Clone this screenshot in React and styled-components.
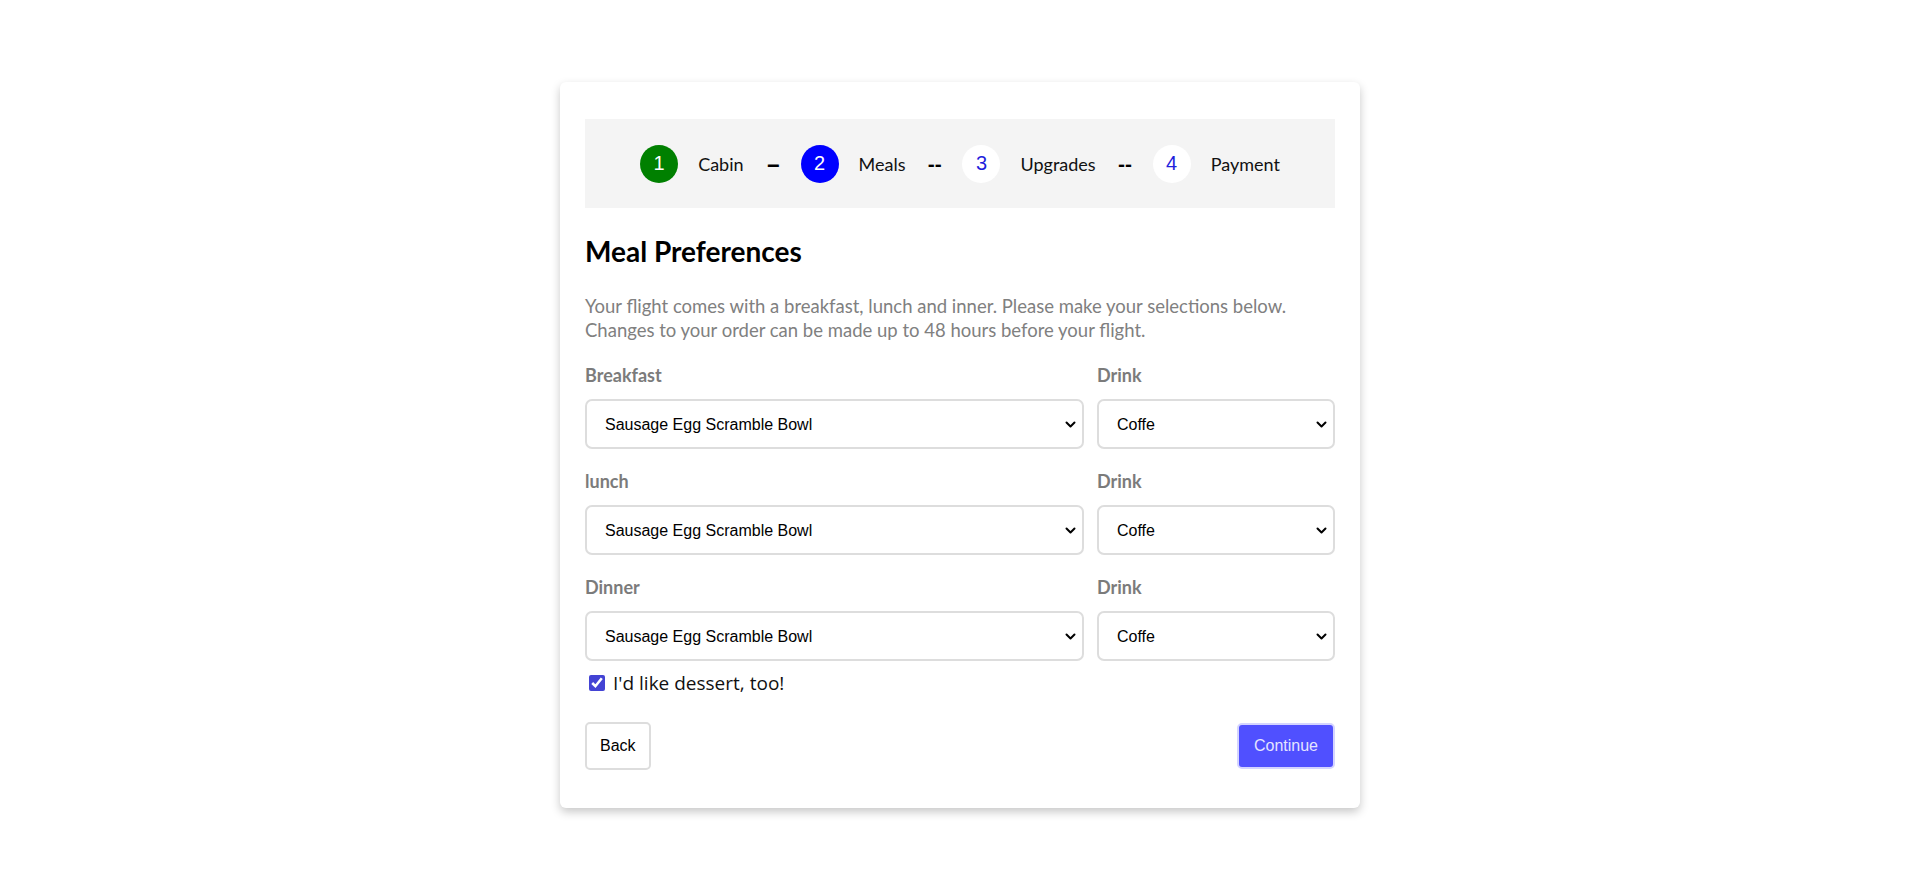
import React from "react";
import styled, { createGlobalStyle } from "styled-components";

const Global = createGlobalStyle`
  html, body { margin: 0; padding: 0; background: #fff; }
  body { font-family: Lato, "Liberation Sans", sans-serif; }
  * { box-sizing: border-box; }
`;

const Page = styled.div`
  display: flex;
  justify-content: center;
  padding-top: 82px;
  min-height: 890px;
`;

const Card = styled.div`
  width: 800px;
  background: #fff;
  border-radius: 6px;
  box-shadow: 0 4px 10px rgba(0, 0, 0, 0.22);
  padding: 37px 25px 38px;
  align-self: flex-start;
`;

const Stepper = styled.div`
  height: 89px;
  background: #f4f4f4;
  display: flex;
  align-items: center;
  justify-content: center;
`;

const Circle = styled.div`
  width: 38px;
  height: 38px;
  border-radius: 50%;
  display: flex;
  align-items: center;
  justify-content: center;
  font-family: "Liberation Sans", Arial, sans-serif;
  font-size: 20px;
  background: ${(p) => p.$bg};
  color: ${(p) => p.$fg};
  flex: none;
`;

const StepLabel = styled.span`
  font-family: Lato, sans-serif;
  font-size: 18px;
  color: #111;
  margin-left: 20px;
  margin-right: ${(p) => (p.$last ? "0" : "22px")};
`;

const Dash = styled.span`
  width: 14px;
  font-family: Lato, sans-serif;
  font-weight: 900;
  font-size: ${(p) => (p.$single ? "27px" : "20px")};
  line-height: 20px;
  color: #000;
  text-align: center;
  margin-right: 21px;
  letter-spacing: -0.5px;
  overflow: visible;
  white-space: nowrap;
`;

const Title = styled.h2`
  margin: 28px 0 0;
  font-family: Lato, sans-serif;
  font-weight: 700;
  font-size: 28px;
  line-height: 30px;
  color: #000;
`;

const Intro = styled.p`
  margin: 28px 0 0;
  font-family: Lato, sans-serif;
  font-size: 18.5px;
  line-height: 24px;
  color: #808080;
`;

const Grid = styled.div`
  margin-top: 21px;
  display: grid;
  grid-template-columns: 499px 1fr;
  column-gap: 13px;
  row-gap: 20px;
`;

const Field = styled.div`
  display: flex;
  flex-direction: column;
`;

const Label = styled.label`
  font-family: Lato, sans-serif;
  font-weight: 700;
  font-size: 18px;
  line-height: 24px;
  color: #7b7b7b;
  margin-bottom: 12px;
`;

const SelectWrap = styled.div`
  position: relative;
`;

const Select = styled.select`
  appearance: none;
  -webkit-appearance: none;
  display: block;
  height: 50px;
  width: 100%;
  border: 2px solid #dddddd;
  border-radius: 7px;
  background: #fff;
  font-family: "Liberation Sans", Arial, sans-serif;
  font-size: 16px;
  color: #000;
  padding: 0 30px 0 18px;
  outline: none;
`;

const Chevron = styled.svg`
  position: absolute;
  right: 8px;
  top: 50%;
  width: 11px;
  height: 7px;
  margin-top: -3px;
  pointer-events: none;
`;

const CheckRow = styled.label`
  display: flex;
  align-items: center;
  margin-top: 9px;
  height: 26px;
  font-family: "Open Sans", sans-serif;
  font-size: 19px;
  color: #111;
`;

const Check = styled.input`
  width: 16px;
  height: 16px;
  margin: 0 8px 0 4px;
  accent-color: #4343d4;
`;

const Actions = styled.div`
  margin-top: 26px;
  display: flex;
  justify-content: space-between;
  align-items: center;
`;

const Button = styled.button`
  height: ${(p) => (p.$primary ? "46px" : "48px")};
  padding: 0 ${(p) => (p.$primary ? "15px" : "13px")};
  border-radius: 5px;
  border: 2px solid ${(p) => (p.$primary ? "#d4d4ff" : "#dddddd")};
  background: ${(p) => (p.$primary ? "#5050ff" : "#fff")};
  color: ${(p) => (p.$primary ? "#e4e4ff" : "#000")};
  font-family: "Liberation Sans", Arial, sans-serif;
  font-size: 16px;
  cursor: pointer;
`;

const steps = [
  { n: 1, label: "Cabin", bg: "#008000", fg: "#fff", dash: "–" },
  { n: 2, label: "Meals", bg: "#0000ff", fg: "#fff", dash: "--" },
  { n: 3, label: "Upgrades", bg: "#fff", fg: "#1f1fdc", dash: "--" },
  { n: 4, label: "Payment", bg: "#fff", fg: "#1f1fdc" },
];

const meals = ["Breakfast", "lunch", "Dinner"];

function Dropdown({ options }) {
  return (
    <SelectWrap>
      <Select defaultValue={options[0]}>
        {options.map((o) => (
          <option key={o} value={o}>{o}</option>
        ))}
      </Select>
      <Chevron viewBox="0 0 11 7" fill="none">
        <path d="M1.5 1.5 L5.5 5.5 L9.5 1.5" stroke="#000" strokeWidth="2" strokeLinecap="round" strokeLinejoin="round" />
      </Chevron>
    </SelectWrap>
  );
}

export default function App() {
  return (
    <>
      <Global />
      <Page>
        <Card>
          <Stepper>
            {steps.map((s) => (
              <React.Fragment key={s.n}>
                <Circle $bg={s.bg} $fg={s.fg}>{s.n}</Circle>
                <StepLabel $last={!s.dash}>{s.label}</StepLabel>
                {s.dash && <Dash $single={s.dash === "–"}>{s.dash}</Dash>}
              </React.Fragment>
            ))}
          </Stepper>
          <Title>Meal Preferences</Title>
          <Intro>
            Your flight comes with a breakfast, lunch and inner. Please make your selections below.
            <br />
            Changes to your order can be made up to 48 hours before your flight.
          </Intro>
          <Grid>
            {meals.map((m) => (
              <React.Fragment key={m}>
                <Field>
                  <Label>{m}</Label>
                  <Dropdown options={["Sausage Egg Scramble Bowl", "Oatmeal"]} />
                </Field>
                <Field>
                  <Label>Drink</Label>
                  <Dropdown options={["Coffe", "Tea"]} />
                </Field>
              </React.Fragment>
            ))}
          </Grid>
          <CheckRow>
            <Check type="checkbox" defaultChecked />
            I'd like dessert, too!
          </CheckRow>
          <Actions>
            <Button>Back</Button>
            <Button $primary>Continue</Button>
          </Actions>
        </Card>
      </Page>
    </>
  );
}
